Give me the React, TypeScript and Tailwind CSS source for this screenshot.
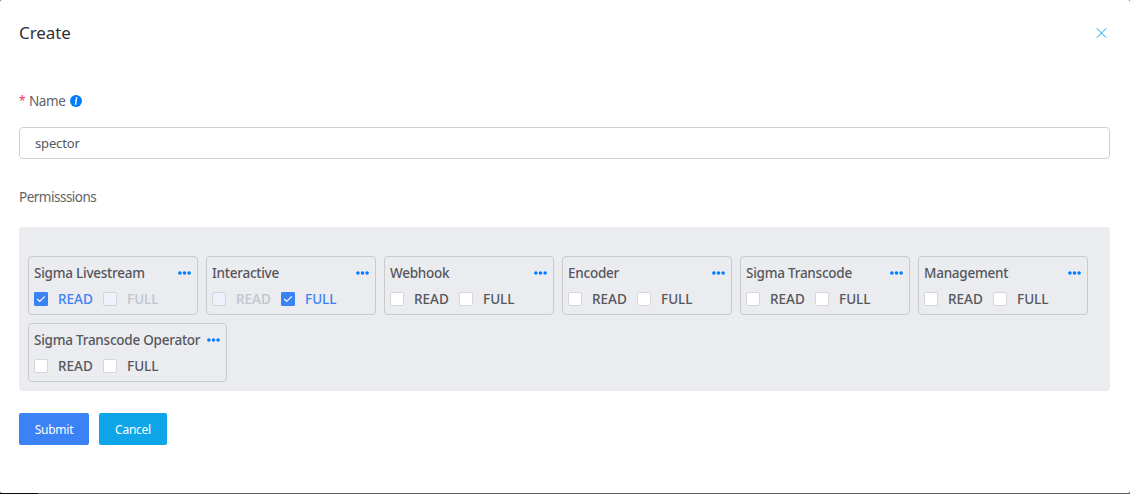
type Mark = 'off' | 'on' | 'disabled';

interface Group {
  name: string;
  read: Mark;
  full: Mark;
  wide?: boolean;
}

const groups: Group[] = [
  { name: 'Sigma Livestream', read: 'on', full: 'disabled' },
  { name: 'Interactive', read: 'disabled', full: 'on' },
  { name: 'Webhook', read: 'off', full: 'off' },
  { name: 'Encoder', read: 'off', full: 'off' },
  { name: 'Sigma Transcode', read: 'off', full: 'off' },
  { name: 'Management', read: 'off', full: 'off' },
  { name: 'Sigma Transcode Operator', read: 'off', full: 'off', wide: true },
];

const boxStyle: Record<Mark, string> = {
  off: 'rounded-[2px] border-[#d4d6da] bg-white',
  on: 'rounded-[1px] border-[#3b82f6] bg-[#3b82f6]',
  disabled: 'rounded-[2px] border-[#d2d4d9] bg-[#edf2fc]',
};

const labelStyle: Record<Mark, string> = {
  off: 'text-[#54575c]',
  on: 'text-[#3b82f6]',
  disabled: 'text-[#c0c4cc]',
};

function Check({ mark, label, className }: { mark: Mark; label: string; className: string }) {
  return (
    <label className={`flex items-center ${className}`}>
      <span className={`flex h-[14px] w-[14px] shrink-0 items-center justify-center border ${boxStyle[mark]}`}>
        {mark === 'on' && (
          <svg width="12" height="12" viewBox="0 0 12 12" fill="none" stroke="white" strokeWidth="1.1" className="shrink-0">
            <path d="M2.2 6 4.7 8.4 9.8 3.3" />
          </svg>
        )}
      </span>
      <span className={`ml-[10px] whitespace-nowrap text-[13.5px] ${labelStyle[mark]}`}>{label}</span>
    </label>
  );
}

function PermissionCard({ group }: { group: Group }) {
  return (
    <div className={`h-[59px] rounded-[4px] border border-[#c9cacc] pl-[5px] pt-[6px] font-medium ${group.wide ? 'w-[199px]' : 'w-[170px]'}`}>
      <div className="flex h-5 items-center justify-between pr-[6px]">
        <span className="whitespace-nowrap text-[13.5px] leading-5 tracking-[-0.24px] text-[#54575c]">{group.name}</span>
        <svg width="13" height="4" viewBox="0 0 13 4" fill="#007bff" className="shrink-0">
          <circle cx="1.9" cy="2" r="1.8" />
          <circle cx="6.5" cy="2" r="1.8" />
          <circle cx="11.1" cy="2" r="1.8" />
        </svg>
      </div>
      <div className="mt-[6px] flex h-5 items-center">
        <Check mark={group.read} label="READ" className="w-[69px]" />
        <Check mark={group.full} label="FULL" className="" />
      </div>
    </div>
  );
}

export default function App() {
  return (
    <div className="flex h-[494px] w-[1130px] flex-col bg-[#625f61] font-['Noto_Sans',sans-serif]">
      <div className="h-[493px] rounded-[2px] bg-white pl-[19px] pr-5">
        <div className="flex h-[66px] items-center justify-between">
          <h1 className="text-[17px] leading-6 tracking-[-0.1px] text-[#303133]">Create</h1>
          <svg width="11" height="11" viewBox="0 0 11 11" stroke="#0ea5e9" strokeWidth="1" className="mr-[3px]">
            <path d="M.8.3 10.2 9.7M10.2.3.8 9.7" />
          </svg>
        </div>
        <div className="mt-[25px] flex h-5 items-center text-[13.5px] leading-5 tracking-[-0.4px] text-[#606266]">
          <span className="w-[10px] text-[12px] text-[#f5365c]">*</span>
          <span>Name</span>
          <svg width="12" height="12" viewBox="0 0 12 12" className="ml-[5px]">
            <circle cx="6" cy="6" r="6" fill="#007bff" />
            <path d="M5 4.9h1.4L5.5 9h1" fill="none" stroke="white" strokeWidth="1.3" />
            <circle cx="6.6" cy="2.9" r=".9" fill="white" />
          </svg>
        </div>
        <input
          defaultValue="spector"
          className="mt-4 block h-8 w-full rounded-[4px] border border-[#cfd0d2] px-[15px] text-[13px] tracking-[-0.15px] text-[#54575c] outline-none"
        />
        <div className="mt-7 h-5 text-[13.5px] leading-5 tracking-[-0.5px] text-[#606266]">Permisssions</div>
        <div className="mt-5 flex h-[164px] flex-wrap content-start gap-2 rounded-[4px] bg-[#ebecf0] pl-[9px] pt-[29px]">
          {groups.map((group) => (
            <PermissionCard key={group.name} group={group} />
          ))}
        </div>
        <div className="mt-[22px] flex gap-[10px] text-xs tracking-[-0.25px] text-white">
          <button className="h-8 w-[70px] rounded-[2px] bg-[#3b82f6] pt-0.5">Submit</button>
          <button className="h-8 w-[68px] rounded-[2px] bg-[#0ea5e9] pt-0.5">Cancel</button>
        </div>
      </div>
      <div className="h-px w-[38px] bg-[#08060c]" />
    </div>
  );
}
